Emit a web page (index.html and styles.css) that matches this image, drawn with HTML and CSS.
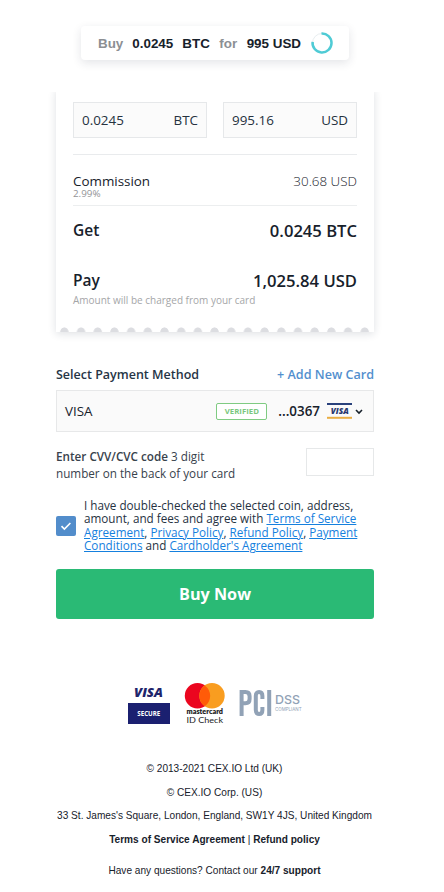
FILE: index.html
```html
<!DOCTYPE html>
<html lang="en">
<head>
<meta charset="utf-8">
<title>Buy BTC</title>
<link rel="stylesheet" href="styles.css">
</head>
<body>
<header class="summary">
  <span class="muted">Buy</span><b class="amount">0.0245</b><b class="coin">BTC</b><span class="muted for">for</span><b class="total">995 USD</b>
  <svg class="timer" viewBox="0 0 24 24"><circle cx="12" cy="12" r="9.5" fill="none" stroke="#e8eef0" stroke-width="1"/><path d="M11.5 2.5A9.5 9.5 0 1 1 2.6 10.8" fill="none" stroke="#4fcbd5" stroke-width="2.5"/></svg>
</header>
<main>
  <section class="receipt">
    <div class="fields">
      <div class="field"><span class="value">0.0245</span><span class="unit">BTC</span></div>
      <div class="field"><span class="value">995.16</span><span class="unit">USD</span></div>
    </div>
    <div class="commission">
      <div class="line"><span class="label">Commission</span><span class="fee">30.68 USD</span></div>
      <div class="rate">2.99%</div>
    </div>
    <div class="line get"><span>Get</span><span class="sum">0.0245 BTC</span></div>
    <div class="line pay"><span>Pay</span><span class="sum">1,025.84 USD</span></div>
    <div class="note">Amount will be charged from your card</div>
    <div class="scallops"></div>
  </section>
  <div class="line method"><span class="method-title">Select Payment Method</span><a class="add">+ Add New Card</a></div>
  <div class="select">
    <span class="brand">VISA</span><span class="verified"><span>VERIFIED</span></span><span class="digits">...0367</span>
    <svg class="visa" viewBox="0 0 25 16"><path d="M0 0h25v2H0z" fill="#29417c"/><path d="M0 13.8h25v2H0z" fill="#e9ad43"/><text x="3.8" y="10.9" textLength="18" lengthAdjust="spacingAndGlyphs" font-family="Open Sans, sans-serif" font-size="8.5" font-weight="800" font-style="italic" fill="#29386e">VISA</text></svg>
    <svg class="chevron" viewBox="0 0 8 6"><path d="M1 1l3 3 3-3" fill="none" stroke="#17212b" stroke-width="1.6"/></svg>
  </div>
  <div class="cvv"><p><b>Enter CVV/CVC code</b> 3 digit<br>number on the back of your card</p><div class="cvv-input"></div></div>
  <div class="agree">
    <span class="check"><svg viewBox="0 0 20 20"><path d="M5.500 10.100l2.900 2.900 6-6" fill="none" stroke="#fff" stroke-width="1.6"/></svg></span>
    <p>I have double-checked the selected coin, address,<br>amount, and fees and agree with <a>Terms of Service</a><br><a>Agreement</a>, <a>Privacy Policy</a>, <a>Refund Policy</a>, <a>Payment</a><br><a>Conditions</a> and <a>Cardholder's Agreement</a></p>
  </div>
  <button class="buy">Buy Now</button>
  <div class="logos">
    <svg viewBox="0 0 180 44" width="180" height="44">
      <g font-family="Open Sans, sans-serif">
      <text x="6" y="15" textLength="29" lengthAdjust="spacingAndGlyphs" font-size="12.5" font-weight="800" font-style="italic" fill="#20246b">VISA</text>
      <path d="M0 21h42v21H0z" fill="#1b2070"/>
      <text x="9.3" y="34" textLength="23" lengthAdjust="spacingAndGlyphs" font-size="6.8" font-weight="700" fill="#fff">SECURE</text>
      </g>
      <circle cx="69.5" cy="13.8" r="12.7" fill="#eb061f"/><circle cx="84" cy="13.8" r="12.7" fill="#f99d20"/>
      <path d="M76.75 3.4a12.7 12.7 0 0 1 0 20.8a12.7 12.7 0 0 1 0-20.8z" fill="#ff5b08"/>
      <g font-family="Lato, sans-serif" fill="#222">
      <text x="58.5" y="32" textLength="36.5" lengthAdjust="spacingAndGlyphs" font-size="6.6" font-weight="800">mastercard</text>
      <text x="58.5" y="41" textLength="36.5" lengthAdjust="spacingAndGlyphs" font-size="8">ID Check</text></g>
      <g fill="none" stroke="#91a2b6" stroke-width="4"><path d="M113.6 34V10h3.8q4.200 0 4.200 4.200v2.800q0 4.200-4.200 4.200h-3.800M134.400 17v-3q0-4-3.300-4T127.800 14v14q0 4 3.300 4t3.300-4v-3M141.200 8v26"/></g>
      <g font-family="Inter, sans-serif" fill="#91a2b6"><text x="147" y="21.5" textLength="25" lengthAdjust="spacingAndGlyphs" font-size="12" font-weight="500">DSS</text><text x="147" y="28.5" textLength="26.5" lengthAdjust="spacingAndGlyphs" font-size="4.8">COMPLIANT</text></g>
    </svg>
  </div>
</main>
<footer>
  <p>© 2013-2021 CEX.IO Ltd (UK)</p>
  <p>© CEX.IO Corp. (US)</p>
  <p>33 St. James's Square, London, England, SW1Y 4JS, United Kingdom</p>
  <p><b>Terms of Service Agreement</b> | <b>Refund policy</b></p>
  <p class="help">Have any questions? Contact our <b>24/7 support</b></p>
</footer>
</body>
</html>
```
FILE: styles.css
```css
* { box-sizing: border-box; }
body { margin: 0; padding-top: 26px; height: 892px; overflow: hidden; background: #fff; color: #17212b; font-family: "Open Sans", sans-serif; font-size: 13.4px; }
p { margin: 0; }
svg { display: block; flex: none; }
.summary { width: 268px; height: 34px; margin-left: 81px; padding-left: 17px; display: flex; align-items: center; border-radius: 4px; box-shadow: 0 3px 10px rgba(30,45,65,.12); font-family: "Liberation Sans", sans-serif; font-size: 13.4px; white-space: nowrap; }
.muted { color: #8c8f93; font-weight: 700; }
.amount { margin-left: 9px; }
.coin { margin-left: 9px; }
.for { margin-left: 9.5px; }
.total { margin-left: 9.5px; }
.timer { width: 24px; height: 24px; margin-left: 8.5px; }
main { width: 318px; margin: 28px 0 0 56px; }
.receipt { height: 244px; padding: 14px 17px 0; display: flex; flex-direction: column; background: #fff; box-shadow: 0 2px 8px rgba(30,45,65,.14); clip-path: inset(4px -15px -15px -15px); }
.fields { display: flex; gap: 16px; height: 53px; border-bottom: 1px solid #e9ebed; }
.field { width: 134px; height: 36px; padding: 0 8px; display: flex; align-items: center; justify-content: space-between; border: 1px solid #e6e8ea; background: #fbfbfb; color: #26323f; }
.line { display: flex; justify-content: space-between; align-items: center; white-space: nowrap; }
.commission { height: 51px; padding-top: 16px; border-bottom: 1px solid #eceeef; }
.commission .line { height: 19px; }
.fee { font-weight: 300; }
.rate { font-size: 9.8px; line-height: 12px; margin-top: -2px; color: #929497; }
.get, .pay { height: 24px; font-size: 15.5px; font-weight: 600; }
.get { margin-top: 12px; }
.pay { margin-top: 26px; }
.sum { font-size: 16.6px; }
.note { margin-top: 1px; color: #a5a6a8; font-size: 10px; line-height: 14px; }
.scallops { height: 5px; margin: auto -17px 0; background: radial-gradient(circle at 8.35px 4.5px, #dcdde1 3.8px, transparent 4.3px) 0 0 / 16.7px 5px repeat-x; }
.method { height: 20px; margin-top: 32px; font-size: 12.5px; font-weight: 600; color: #263546; }
.add { color: #528fce; font-size: 12.6px; }
.select { height: 42px; margin-top: 6px; padding: 0 10px 0 8px; display: flex; align-items: center; border: 1px solid #e7e8e9; background: #fafafa; font-size: 13.4px; }
.verified { width: 51px; height: 17px; margin-left: auto; display: flex; align-items: center; justify-content: center; border: 1px solid #7fcb82; border-radius: 2px; color: #7ac77d; font-size: 7.8px; font-weight: 700; background: #fff; }
.digits { margin-left: 11px; font-weight: 600; font-size: 13.4px; }
.visa { width: 25px; height: 16px; margin-left: 7px; }
.chevron { width: 8px; height: 6px; margin-left: 3px; margin-top: 2px; }
.cvv { display: flex; justify-content: space-between; margin-top: 16px; height: 36px; font-size: 11.7px; line-height: 17px; color: #38424c; white-space: nowrap; }
.cvv b { font-weight: 600; }
.cvv-input { width: 68px; height: 28px; border: 1px solid #e6e8e9; background: #fff; }
.agree { display: flex; margin-top: 15px; height: 54px; gap: 8px; font-size: 11.7px; line-height: 13.4px; color: #26323f; white-space: nowrap; }
.agree a { color: #1580de; text-decoration: underline; }
.check { width: 20px; height: 20px; margin-top: 17px; border-radius: 2px; background: #528dcb; }
.buy { display: block; width: 318px; height: 50px; margin: 16px 0 0; padding: 0; border: 0; border-radius: 3px; background: #2aba75; color: #fff; font: 700 16.2px/50px "Open Sans", sans-serif; }
.logos { height: 44px; margin: 63px 0 0 72px; }
footer { margin-top: 31px; text-align: center; padding-right: 15px; font: 10.1px/24px "Liberation Sans", sans-serif; white-space: nowrap; }
footer p { height: 23.5px; }
footer .help { margin-top: 8px; }
```
